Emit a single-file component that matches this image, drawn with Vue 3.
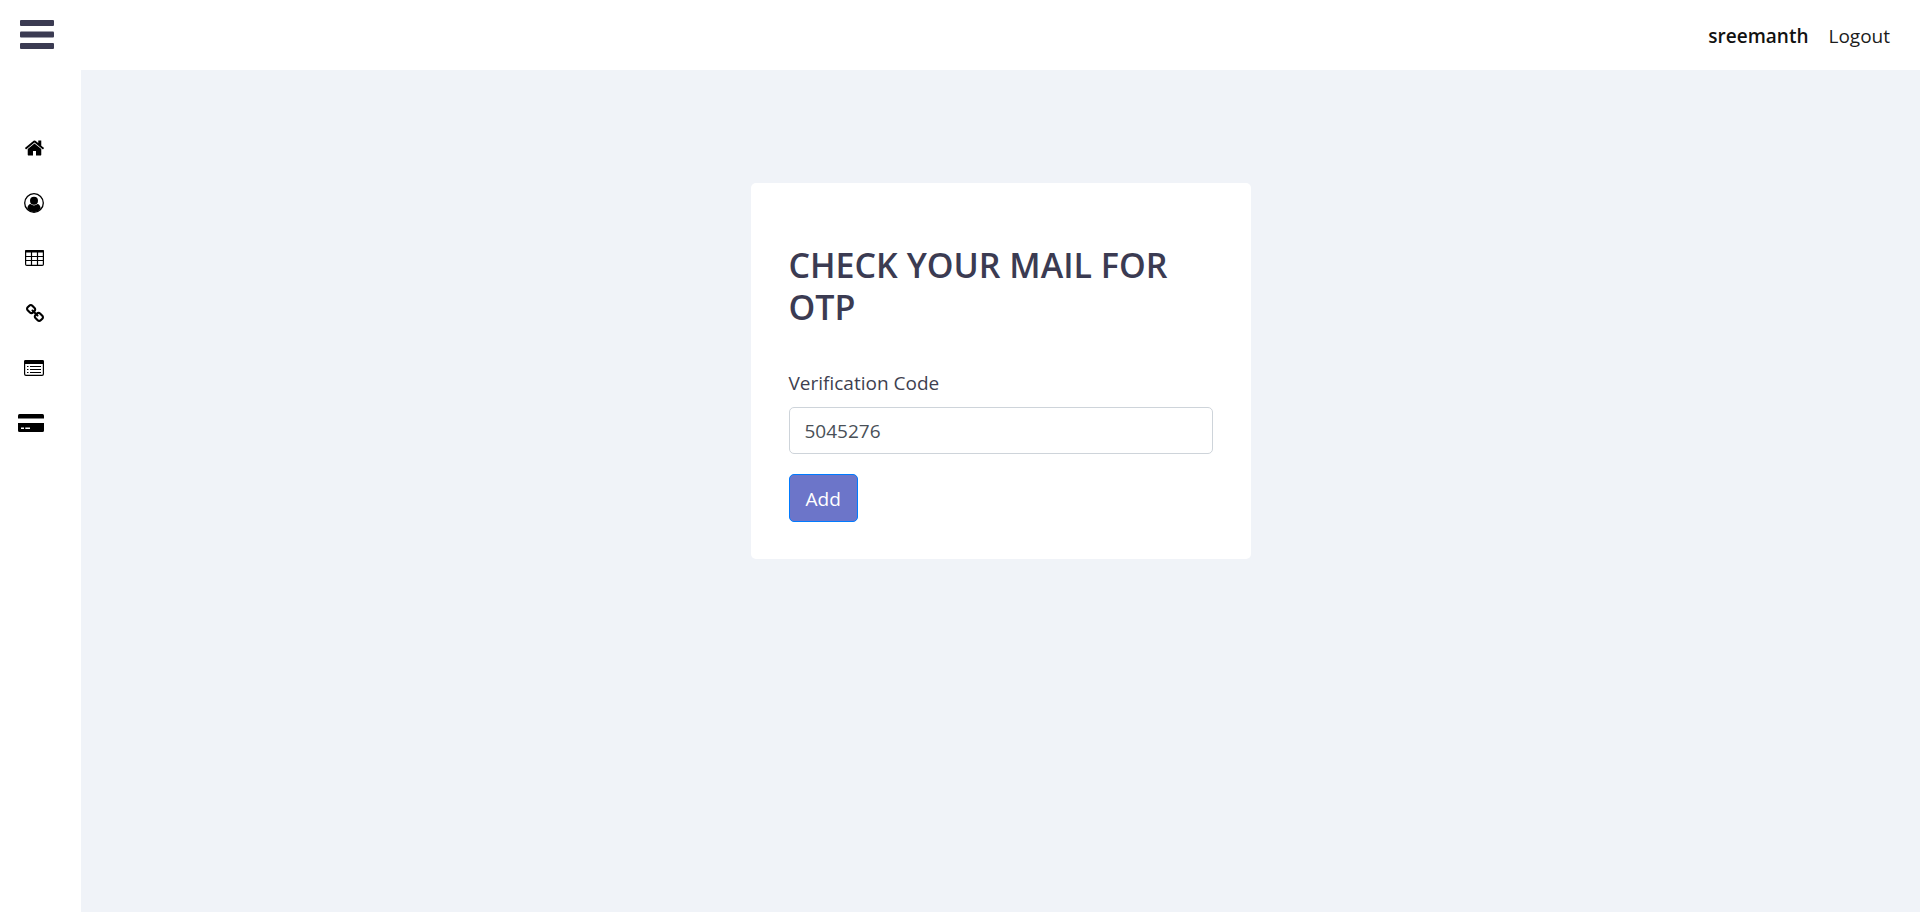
<script setup>
import { ref } from 'vue'

const code = ref('5045276')
</script>

<template>
  <div class="page">
    <header class="topbar">
      <button class="menu" type="button" aria-label="Toggle menu">
        <svg width="34" height="30" viewBox="0 0 34 30" fill="currentColor">
          <rect width="34" height="6" rx="1" />
          <rect y="11.5" width="34" height="6" rx="1" />
          <rect y="23" width="34" height="6" rx="1" />
        </svg>
      </button>
      <nav class="account">
        <a class="user" href="#">sreemanth</a>
        <a href="#">Logout</a>
      </nav>
    </header>

    <div class="body">
      <nav class="sidebar" aria-label="Main">
        <a href="#" aria-label="Home">
          <svg width="19" height="16" viewBox="88 253 1616 1290" fill="currentColor">
            <path d="M1472 992v480q0 26-19 45t-45 19h-384v-384h-256v384h-384q-26 0-45-19t-19-45v-480q0-1 .5-3t.5-3l575-474 575 474q1 2 1 6zm223-69l-62 74q-8 9-21 11h-3q-13 0-21-7l-692-577-692 577q-12 8-24 7-13-2-21-11l-62-74q-8-10-7-23.500t11-21.500l719-599q32-26 76-26t76 26l244 204v-195q0-14 9-23t23-9h192q14 0 23 9t9 23v408l219 182q10 8 11 21.500t-7 23.500z" />
          </svg>
        </a>
        <a href="#" aria-label="Profile">
          <svg width="20" height="20" viewBox="0 0 20 20">
            <circle cx="10" cy="10" r="9.3" fill="none" stroke="currentColor" stroke-width="1.3" />
            <circle cx="10" cy="7.700" r="4" fill="currentColor" />
            <path d="M3.300 15.500C3.700 12.800 4.900 11.200 6.600 11.100C8.500 12.900 11.500 12.900 13.400 11.100C15.100 11.200 16.300 12.800 16.700 15.500C15 17.900 12.600 19 10 19S5 17.900 3.300 15.500Z" fill="currentColor" />
          </svg>
        </a>
        <a href="#" aria-label="Tables">
          <svg width="19" height="16" viewBox="0 0 19 16">
            <rect x=".6" y=".6" width="17.800" height="14.800" rx="1.200" fill="none" stroke="currentColor" stroke-width="1.200" />
            <path d="M1 0H18Q19 0 19 1V2.500H0V1Q0 0 1 0Z" fill="currentColor" />
            <path d="M.5 6.500H18.500M.5 10.500H18.500M6.500 2V15.500M12.500 2V15.500" fill="none" stroke="currentColor" stroke-width="1.200" />
          </svg>
        </a>
        <a href="#" aria-label="Links">
          <svg width="18" height="18" viewBox="80 16 1632 1632" fill="currentColor">
            <path d="M1520 1216q0-40-28-68l-208-208q-28-28-68-28-42 0-72 32 3 3 19 18.500t21.500 21.500 15 19 13 25.500 3.500 27.500q0 40-28 68t-68 28q-15 0-27.500-3.500t-25.500-13-19-15-21.500-21.500-18.500-19q-33 31-33 73 0 40 28 68l206 207q27 27 68 27 40 0 68-26l147-146q28-28 28-67zm-703-705q0-40-28-68l-206-207q-28-28-68-28-39 0-68 27l-147 146q-28 28-28 67 0 40 28 68l208 208q27 27 68 27 42 0 72-31-3-3-19-18.500t-21.500-21.500-15-19-13-25.500-3.500-27.500q0-40 28-68t68-28q15 0 27.500 3.500t25.500 13 19 15 21.500 21.500 18.500 19q33-31 33-73zm895 705q0 120-85 203l-147 146q-83 83-203 83-121 0-204-85l-206-207q-83-83-83-203 0-123 88-209l-88-88q-86 88-208 88-120 0-204-84l-208-208q-84-84-84-204t85-203l147-146q83-83 203-83 121 0 204 85l206 207q83 83 83 203 0 123-88 209l88 88q86-88 208-88 120 0 204 84l208 208q84 84 84 204z" />
          </svg>
        </a>
        <a href="#" aria-label="Listings">
          <svg width="20" height="16" viewBox="0 0 20 16">
            <rect x=".6" y=".6" width="18.800" height="14.800" rx="1.400" fill="none" stroke="currentColor" stroke-width="1.200" />
            <path d="M1.500 0H18.500Q20 0 20 1.500V4H0V1.500Q0 0 1.500 0Z" fill="currentColor" />
            <path d="M3 6.500H4.500M6 6.500H17M3 9.500H4.500M6 9.500H17M3 12.500H4.500M6 12.500H17" fill="none" stroke="currentColor" stroke-width="1.100" />
          </svg>
        </a>
        <a href="#" aria-label="Payments">
          <svg width="26" height="18" viewBox="0 0 26 18" fill="currentColor">
            <path d="M1.500 0H24.500Q26 0 26 1.500V4.500H0V1.500Q0 0 1.500 0Z" />
            <path fill-rule="evenodd" d="M0 9H26V16.500Q26 18 24.500 18H1.500Q0 18 0 16.500ZM3 13.500V15H6V13.500ZM7.300 13.500V15H12V13.500Z" />
          </svg>
        </a>
      </nav>

      <main class="content">
        <form class="card" @submit.prevent>
          <h1>CHECK YOUR MAIL FOR OTP</h1>
          <label for="code">Verification Code</label>
          <input id="code" v-model="code" type="text" />
          <button class="add" type="submit">Add</button>
        </form>
      </main>
    </div>
  </div>
</template>

<style>
body {
  margin: 0;
}
</style>

<style scoped>
.page {
  display: flex;
  flex-direction: column;
  min-height: 100vh;
  background: #fff;
  color: #3e3f50;
  font-family: "Segoe UI", "Open Sans", "Noto Sans", sans-serif;
  font-size: 19px;
  line-height: 30px;
}

.page *,
.page {
  box-sizing: border-box;
}

.topbar {
  display: flex;
  align-items: center;
  justify-content: space-between;
  height: 70px;
  padding: 0 30px 0 20px;
}

.menu {
  display: flex;
  padding: 0;
  border: 0;
  background: none;
  color: #3b3b52;
  cursor: pointer;
}

.account {
  display: flex;
  gap: 20px;
  padding-top: 2px;
}

.account a {
  color: #1c1c1c;
  text-decoration: none;
}

.account .user {
  color: #111;
  font-weight: 600;
}

.body {
  display: flex;
  flex: 1;
}

.sidebar {
  display: flex;
  flex-direction: column;
  width: 81px;
  padding-top: 51px;
}

.sidebar a {
  display: flex;
  align-items: center;
  justify-content: flex-end;
  height: 55px;
  padding: 0 37px 1px 0;
  color: #000;
}

.content {
  flex: 1;
  padding: 113px 20px;
  background: #f0f3f8;
}

.card {
  display: flex;
  flex-direction: column;
  align-items: flex-start;
  max-width: 500px;
  margin: 0 auto;
  padding: 61px 38px 37px;
  border-radius: 5px;
  background: #fff;
}

h1 {
  margin: 0 0 40px;
  color: #3b3b52;
  font-size: 34px;
  font-weight: 600;
  line-height: 42px;
}

label {
  margin-bottom: 9px;
}

input {
  width: 100%;
  height: 47px;
  padding: 1px 15px 0;
  border: 1px solid #ced4da;
  border-radius: 5px;
  background: #fff;
  color: #495057;
  font: inherit;
}

.add {
  height: 48px;
  margin-top: 20px;
  padding: 1px 16px 0;
  border: 1px solid #007bff;
  border-radius: 5px;
  background: #6c75c9;
  color: #fff;
  font: inherit;
  cursor: pointer;
}
</style>
